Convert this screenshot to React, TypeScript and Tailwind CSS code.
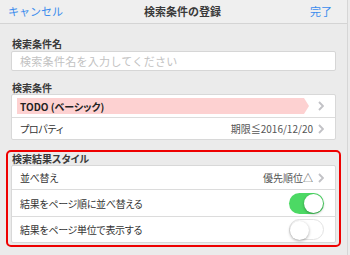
import { ReactNode } from 'react';

const font = { fontFamily: '"Noto Sans CJK JP", "Noto Sans", sans-serif' };

const Chevron = () => (
  <svg width="6" height="10" viewBox="0 0 6 10" className="shrink-0">
    <polyline points="1,1 5,5 1,9" fill="none" stroke="#c2c2c6" strokeWidth="1.9" />
  </svg>
);

const Toggle = ({ on }: { on: boolean }) => (
  <div
    className={`relative w-[35px] h-[21px] rounded-full shrink-0 ${
      on ? 'bg-[#4cd964]' : 'bg-white border border-[#e3e3e3]'
    }`}
  >
    <div
      className={`absolute top-[1px] w-[19px] h-[19px] rounded-full bg-white shadow-[0_1px_3px_rgba(0,0,0,0.35)] ${
        on ? 'right-[1px]' : 'left-[0px] top-[0px]'
      }`}
    />
  </div>
);

const Label = ({ children }: { children: ReactNode }) => (
  <div className="text-[10px] leading-[13px] font-bold text-[#3a3a3a] px-[1px] [font-feature-settings:'palt']">
    {children}
  </div>
);

const Row = ({
  children,
  right,
  h = 'h-[22px]',
  first = false,
}: {
  children: ReactNode;
  right?: ReactNode;
  h?: string;
  first?: boolean;
}) => (
  <div
    className={`flex items-center justify-between pl-2 pr-[11px] ${h} ${
      first ? '' : 'border-t border-[#dcdcdc]'
    }`}
  >
    <div className="text-[10px] text-[#333] tracking-[-0.3px] [font-feature-settings:'palt']">{children}</div>
    <div className="flex items-center gap-[5px]">{right}</div>
  </div>
);

export default function App() {
  return (
    <div className="w-[350px] h-[255px] bg-[#ebebeb] overflow-hidden" style={font}>
      <div className="w-[348px] h-full border-r border-[#d6d6d6]">
        <div className="h-6 flex items-center justify-between pl-2 pr-[15px] bg-[#efefef] border-b border-[#d4d4d4]">
          <span className="text-[11px] text-[#3b8ced]">キャンセル</span>
          <span className="text-[11px] font-bold text-[#3a3a3a] -ml-[8px]">検索条件の登録</span>
          <span className="text-[11px] text-[#3b8ced]">完了</span>
        </div>

        <div className="px-[11px] pt-[13px]">
          <Label>検索条件名</Label>
          <div className="mt-[1px] h-5 bg-white border border-[#d6d6d6] rounded-[2px] flex items-center pl-2 text-[11px] text-[#c2c2c2] tracking-[0.3px]">
            検索条件名を入力してください
          </div>

          <div className="mt-[10px]">
            <Label>検索条件</Label>
          </div>
          <div className="bg-white border border-[#d8d8d8] rounded-[2px]">
            <div className="flex items-center justify-between pl-[5px] pr-[11px] h-[22px]">
              <div className="flex-1 h-4 bg-[#fdd1d1] [clip-path:polygon(0_0,calc(100%-5px)_0,100%_50%,calc(100%-5px)_100%,0_100%)] flex items-center pl-[3px] mr-[9px] text-[10px] font-bold text-[#222] [font-feature-settings:'palt']">
                TODO (ベーシック)
              </div>
              <Chevron />
            </div>
            <Row right={<><span className="text-[10px] text-[#555]">期限≦2016/12/20</span><Chevron /></>}>
              プロパティ
            </Row>
          </div>

          <div className="mt-[10px] -mx-[5px] px-[3px] pb-[2px] border-2 border-[#ee0000] rounded-[5px]">
            <Label>検索結果スタイル</Label>
            <div className="bg-white border border-[#d8d8d8] rounded-[2px]">
              <Row first h="h-[23px]" right={<><span className="text-[10px] text-[#555]">優先順位△</span><Chevron /></>}>
                並べ替え
              </Row>
              <Row h="h-[27px]" right={<Toggle on />}>
                結果をページ順に並べ替える
              </Row>
              <Row h="h-[26px]" right={<Toggle on={false} />}>
                結果をページ単位で表示する
              </Row>
            </div>
          </div>
        </div>
      </div>
    </div>
  );
}
